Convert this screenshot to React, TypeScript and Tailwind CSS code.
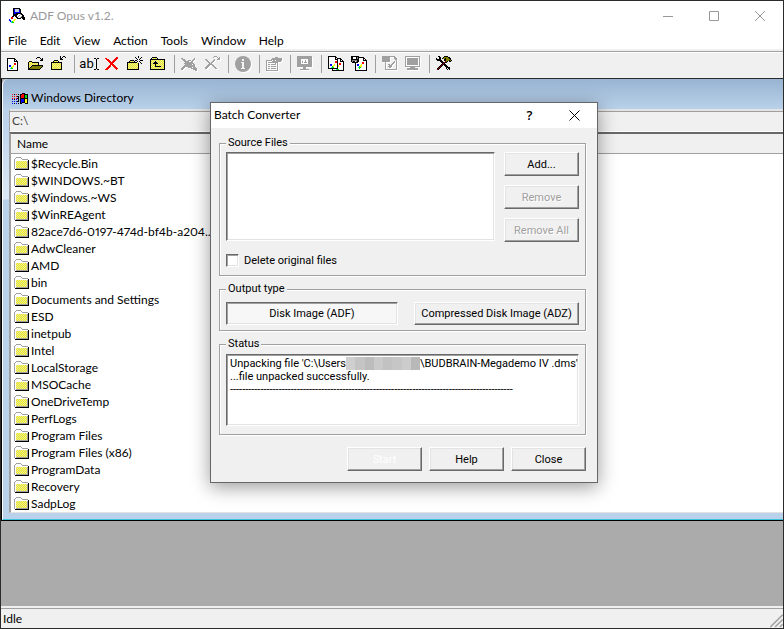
import { useState } from "react";
import type { ReactNode } from "react";

const COLORS: Record<string, string> = {
  k: "#000000",
  w: "#ffffff",
  y: "#ffff00",
  d: "#d8d8b8",
  o: "#808000",
  r: "#ff0000",
  b: "#0000ff",
  g: "#00e000",
  c: "#00e0e0",
  a: "#a0a0a0",
  s: "#808080",
  n: "#000080",
  m: "#800000",
  l: "#c8d0d8",
};

// one character per pixel, anything not in COLORS is transparent
function PixelIcon({ rows, className = "" }: { rows: string[]; className?: string }) {
  const w = Math.max(...rows.map((r) => r.length));
  return (
    <svg width={w} height={rows.length} viewBox={`0 0 ${w} ${rows.length}`} shapeRendering="crispEdges" className={`shrink-0 ${className}`} aria-hidden="true">
      {rows.map((row, y) =>
        row.split("").map((ch, x) =>
          COLORS[ch] ? <rect key={`${x}-${y}`} x={x} y={y} width="1" height="1" fill={COLORS[ch]} /> : null
        )
      )}
    </svg>
  );
}

const appIcon = [
  "....kkkkkkk.....",
  "....kbllllkk....",
  "....kbllllbk....",
  "....kbllllbk....",
  "....kbbbbbbk....",
  "....kbbkkkkkk...",
  "....kkkkkwwakk..",
  "....kkkkwwawwkk.",
  "...kk.kkwawwakk.",
  "..rr...kkwwakkkk",
  "..rr....kkkk.kkk",
  "b....yy.......kk",
  "bb..yy..........",
  ".bcgy...........",
  "..cgg...........",
  "................",
];

const windowsIcon = [
  "..........kkk...",
  "r.k.r.k.kkrrkkkk",
  "........krrrkggk",
  "r.r.rkk.krrrkggk",
  "......k.krrrkggk",
  "r.r.rkk.kkkkkkkk",
  "b.k.b.k.kbbbkyyk",
  "......k.kbbbkyyk",
  "b.b.bkk.kbbbkyyk",
  "........kbkkkyyk",
  "b.k.b.k.kk...kkk",
];

const folderIcon = [
  "..aaaaa.........",
  ".awwwwwa........",
  "awwwwwwwaaaaaa..",
  "awwwwwwwwwwwwwk.",
  "awdydydydydydak.",
  "awydydydydydyak.",
  "awdydydydydydak.",
  "awydydydydydyak.",
  "awdydydydydydak.",
  "awydydydydydyak.",
  "awdydydydydydak.",
  "awaaaaaaaaaaaak.",
  ".kkkkkkkkkkkkkk.",
];

const newIcon = [
  "................",
  "................",
  "...kkkkkkkk.....",
  "...kwwwwwwkk....",
  "...kwwwwwwkwk...",
  "...kwwwwwwkkkk..",
  "...kwwwwwwwwwk..",
  "...kwwwwwwrrwk..",
  "...kwwwwwwrrwk..",
  "...kwbbwwywwwk..",
  "...kwbbwyywwwk..",
  "...kwwwgywwwwk..",
  "...kwwcggwwwwk..",
  "...kwwwwwwwwwk..",
  "...kkkkkkkkkkk..",
  "................",
];

const openIcon = [
  "................",
  "..........kkk...",
  ".........k...k.k",
  "..............kk",
  ".............kkk",
  "..kkk...........",
  ".kydykkkkkkk....",
  ".kdydydydydk....",
  ".kydydydydyk....",
  ".kdydkkkkkkkkkkk",
  ".kydkooooooooook",
  ".kdkooooooooook.",
  ".kkooooooooook..",
  ".kkkkkkkkkkkk...",
  "................",
  "................",
];

const closeFolderIcon = [
  "..........k..kk.",
  "..........k.k..k",
  "..........kk....",
  "..........kkk...",
  "....kkkk........",
  "...kydydk.......",
  ".kkkkkkkkkkk....",
  ".kdydydydydk....",
  ".kydydydydyk....",
  ".kdydydydydk....",
  ".kydydydydyk....",
  ".kdydydydydk....",
  ".kydydydydyk....",
  ".kkkkkkkkkkk....",
  "................",
  "................",
];

const newFolderIcon = [
  "...........k....",
  "........k..k..k.",
  ".........k...k..",
  "..........k.k...",
  "...kkkk.kk...kkk",
  "..kydydk..k.k...",
  "kkkkkkkkkk...k..",
  "kdydydydydyk..k.",
  "kydydydydydk....",
  "kdydydydydyk....",
  "kydydydydydk....",
  "kdydydydydyk....",
  "kydydydydydk....",
  "kkkkkkkkkkkk....",
  "................",
  "................",
];

const upFolderIcon = [
  "................",
  "..kkkkk.........",
  ".kdydydk........",
  "kkkkkkkkkkkkkkk.",
  "kdydydydydydydk.",
  "kydydkdydydydyk.",
  "kdydkkkdydydydk.",
  "kydkkkkkdydydyk.",
  "kdydykydydydydk.",
  "kydydkdydydydyk.",
  "kdydykkkkkkdydk.",
  "kydydydydydydyk.",
  "kdydydydydydydk.",
  "kkkkkkkkkkkkkkk.",
  "................",
  "................",
];

const discardIcon = [
  "................",
  "................",
  "aa...........a..",
  ".aaa........aa..",
  "..aaa..aaa.aa...",
  "...aaaaa..aa....",
  "....aaaaaaaa....",
  "...aaaaaaaaaa...",
  "....aaaaaaa.aa..",
  "...aaaaaaaaaaa..",
  "..aaaaaaaaaaaa..",
  ".aaa...aaaa.aaa.",
  "aaa.......aaaaaa",
  "aa..........aaaa",
  "..............aa",
  "................",
];

const crossArrowIcon = [
  "..........aaa...",
  ".........a...a.a",
  "..............aa",
  ".aa.......a..aaa",
  "..aa.....aa.....",
  "...aa...aa......",
  "....aa.aa.......",
  ".....aaa........",
  "....aaaaa.......",
  "...aaa..aa......",
  "..aaa....aa.....",
  ".aaa......aa....",
  ".aa........aa...",
  "................",
  "................",
  "................",
];

const propertiesIcon = [
  "................",
  ".........aaa....",
  "......aaaaaaaaaa",
  ".....aaaaaaaaaaa",
  "aaaaaa.aa.aaaaaa",
  "a.....aaaaaaaaa.",
  "a.aaaaaaaaaa....",
  "a........a.a....",
  "a.aa.aaaaa.a....",
  "a..........a....",
  "a.aa.aaaaa.a....",
  "a..........a....",
  "a.aa.aaaaa.a....",
  "a..........a....",
  "aaaaaaaaaaaa....",
  "................",
];

const virtualIcon = [
  "aaaaaaaaaaaaaaa.",
  "aaaaaaaaaaaaaaa.",
  "aaaaaaaaaaaaaaa.",
  "aaaawwwwwwwaaaa.",
  "aaaawwwwawwaaaa.",
  "aaaawawwawwaaaa.",
  "aaaawawaaawaaaa.",
  "aaaawwwwwwwaaaa.",
  "aaaaaaaaaaaaaaa.",
  "aaaaaaaaaaaaaaa.",
  "aaaaaaaaaaaaaaa.",
  "......aaa.......",
  "......aaa.......",
  "...aaaaaaaaa....",
  "................",
  "................",
];

const convertIcon = [
  "kkkkkkkk........",
  "kwwwwwwkk.......",
  "kwwwwwwkwkkkk...",
  "kwwwwwwkkkwwkk..",
  "kwwwwwwwwkwwkwk.",
  "kwwwwwwrrkwwkkkk",
  "kwwwwwwrrkwwwwwk",
  "kwwwwwwwwkwrrwwk",
  "kwbbwwywwkwrrwwk",
  "kwbbwyywwkywwwwk",
  "kwwwgywwwkywwwwk",
  "kwwcggwwwkwwwwwk",
  "kkkkkkkkkkwwwwwk",
  "....kwwwcggwwwwk",
  "....kkkkkkkkkkkk",
  "................",
];

const saveDiskIcon = [
  "kkkkkkkk........",
  "kkwwwkskkkkkk...",
  "kkwwwkskwwwwkk..",
  "kkkkkkkkwwwwkwk.",
  "kssssskkwwwwkkkk",
  "kskkwskkwwwwwwwk",
  ".kkkkkkwwwwrrwwk",
  "....kwwwwwwrrwwk",
  "....kwbbwwywwwwk",
  "....kwbbwyywwwwk",
  "....kwwwgyywwwwk",
  "....kwwcggwwwwwk",
  "....kwwwgwwwwwwk",
  "....kwwwwwwwwwwk",
  "....kkkkkkkkkkkk",
  "................",
];

const checkDiskIcon = [
  "aaaaaaaaaaaaa...",
  "aaaaaaaa....aa..",
  "aaaaaaaa....aaa.",
  "aaaaaaaa.....aa.",
  "aaaaaaaa......a.",
  "aaaaaaaa....a.a.",
  "...a.......aa.a.",
  "...a......aa..a.",
  "...a..aa.aa...a.",
  "...a...aaa....a.",
  "...a..aaaa....a.",
  "...a...aa.....a.",
  "...a..........a.",
  "...aaaaaaaaaaaa.",
  "................",
  "................",
];

const monitorIcon = [
  "aaaaaaaaaaaaaaa.",
  "a.............a.",
  "a.aaaaaaaaaaa.a.",
  "a.aaaaaaaaaaa.a.",
  "a.aaaaaaaaaaa.a.",
  "a.aaaaaaaaaaa.a.",
  "a.aaaaaaaaaaa.a.",
  "a.aaaaaaaaaaa.a.",
  "a.aaaaaaaaaaa.a.",
  "a.............a.",
  "aaaaaaaaaaaaaaa.",
  ".....aaaaa......",
  "..aaaaaaaaaaa...",
  "..aaaaaaaaaaa...",
  "................",
  "................",
];

const toolsIcon = [
  "..kk....kkkk....",
  "...kk..kooookk..",
  "k..kk.kookoookk.",
  "kkkkk...kkooook.",
  ".kkkkk..kkoookok",
  "....kkk..mok.kk.",
  ".....kkkmkk.....",
  "......kmk.......",
  ".....kmkkk......",
  "....kmk.kkk.....",
  "...kmk...kkk....",
  "..kmk.....kkkk..",
  ".kmk......k.kk..",
  ".mk........k.k..",
  "................",
  "................",
];

const ibeamIcon = [
  "kk.kk",
  "..k..",
  "..k..",
  "..k..",
  "..k..",
  "..k..",
  "..k..",
  "..k..",
  "..k..",
  "..k..",
  "..k..",
  "kk.kk",
];

function Tool({ label, disabled = false, children }: { label: string; disabled?: boolean; children: ReactNode }) {
  return (
    <button
      aria-label={label}
      disabled={disabled}
      className={`flex h-[22px] w-[23px] items-center justify-center pr-px ${disabled ? "drop-shadow-[1px_1px_0_#ffffff]" : ""}`}
    >
      {children}
    </button>
  );
}

function Separator() {
  return (
    <div className="flex h-[18px] w-2 justify-center">
      <div className="w-px bg-[#a0a0a0]" />
    </div>
  );
}

function Toolbar() {
  return (
    <div className="flex h-[26px] items-center border-t border-white bg-[#f0f0f0] pb-[3px]">
      <Tool label="New"><PixelIcon rows={newIcon} /></Tool>
      <Tool label="Open"><PixelIcon rows={openIcon} /></Tool>
      <Tool label="Close image"><PixelIcon rows={closeFolderIcon} /></Tool>
      <Separator />
      <Tool label="Rename">
        <span className="text-[13px] leading-4 font-[Roboto,sans-serif]">ab</span>
        <PixelIcon rows={ibeamIcon} />
      </Tool>
      <Tool label="Delete">
        <svg width="14" height="14" viewBox="0 0 14 14" stroke="#ff0000" strokeWidth="2" shapeRendering="crispEdges">
          <path d="M0.5 1 L12.5 12.5 M12.5 0.5 L1 13" fill="none" />
        </svg>
      </Tool>
      <Tool label="New folder"><PixelIcon rows={newFolderIcon} /></Tool>
      <Tool label="Up one level"><PixelIcon rows={upFolderIcon} /></Tool>
      <Separator />
      <Tool label="Discard" disabled><PixelIcon rows={discardIcon} /></Tool>
      <Tool label="Undelete" disabled><PixelIcon rows={crossArrowIcon} /></Tool>
      <Separator />
      <Tool label="Information" disabled>
        <svg width="16" height="16" viewBox="0 0 16 16">
          <circle cx="8" cy="8" r="8" fill="#a0a0a0" />
          <path d="M7 3h2v2H7z M6 6h3v6h1v1H6v-1h1V7H6z" fill="#f4f4f4" />
        </svg>
      </Tool>
      <Separator />
      <Tool label="Properties" disabled><PixelIcon rows={propertiesIcon} /></Tool>
      <Separator />
      <Tool label="Disk contents" disabled><PixelIcon rows={virtualIcon} /></Tool>
      <Separator />
      <Tool label="Batch convert"><PixelIcon rows={convertIcon} /></Tool>
      <Tool label="Disk to image"><PixelIcon rows={saveDiskIcon} /></Tool>
      <Separator />
      <Tool label="Check disk" disabled><PixelIcon rows={checkDiskIcon} /></Tool>
      <Tool label="Run emulator" disabled><PixelIcon rows={monitorIcon} /></Tool>
      <Separator />
      <Tool label="Options"><PixelIcon rows={toolsIcon} /></Tool>
    </div>
  );
}

const menus = ["File", "Edit", "View", "Action", "Tools", "Window", "Help"];

const folders = [
  "$Recycle.Bin",
  "$WINDOWS.~BT",
  "$Windows.~WS",
  "$WinREAgent",
  "82ace7d6-0197-474d-bf4b-a204...",
  "AdwCleaner",
  "AMD",
  "bin",
  "Documents and Settings",
  "ESD",
  "inetpub",
  "Intel",
  "LocalStorage",
  "MSOCache",
  "OneDriveTemp",
  "PerfLogs",
  "Program Files",
  "Program Files (x86)",
  "ProgramData",
  "Recovery",
  "SadpLog",
];

function TitleBar() {
  return (
    <header className="flex h-[30px] items-center pl-2">
      <PixelIcon rows={appIcon} />
      <h1 className="flex-1 pl-[5px] text-[#999999]">ADF Opus v1.2.</h1>
      <div className="flex h-full text-[#999999]">
        <button aria-label="Minimize" className="flex w-[46px] items-center justify-center">
          <svg width="10" height="10" stroke="currentColor"><path d="M0 5.5h10" /></svg>
        </button>
        <button aria-label="Maximize" className="flex w-[46px] items-center justify-center">
          <svg width="10" height="10" stroke="currentColor" fill="none"><path d="M.5 .5h9v9h-9z" /></svg>
        </button>
        <button aria-label="Close" className="flex w-[46px] items-center justify-center">
          <svg width="10" height="10" stroke="currentColor"><path d="M0 0l10 10M10 0L0 10" /></svg>
        </button>
      </div>
    </header>
  );
}

function DirectoryWindow() {
  return (
    <section className="border-b border-l border-black">
      <div className="flex flex-col rounded-tl-md border-b border-l border-b-[#3cc4dc] border-l-white bg-[#b9d1ea] bg-[linear-gradient(#98b4d2,#b9d1ea_30px,#dce8f5_120px,#b9d1ea_121px)] pb-[6px] pl-[6px]">
        <div className="flex h-[30px] items-center pt-2 pl-[3px]">
          <PixelIcon rows={windowsIcon} />
          <h2 className="pl-[3px]">Windows Directory</h2>
        </div>
        <div className="border-t-2 border-b border-l border-t-[#e3e3e3] border-b-white border-l-[#a0a0a0]">
          <div className="h-[20px] border-t border-[#a0a0a0] bg-[#f0f0f0] pl-[2px] leading-[18px] text-[#444444]">C:\</div>
        </div>
        <div className="border-t-2 border-b border-l-2 border-t-[#696969] border-b-[#e3e3e3] border-l-[#a0a0a0] bg-white">
          <table className="w-full table-fixed border-collapse">
            <thead>
              <tr className="h-[19px] border-b border-[#a0a0a0] bg-[#f0f0f0]">
                <th className="w-[199px] border-r border-[#a0a0a0] p-0 pt-px pl-[6px] text-left leading-[17px] font-normal">Name</th>
                <th className="p-0" />
              </tr>
            </thead>
            <tbody>
              <tr className="h-[2px]"><td /></tr>
              {folders.map((name) => (
                <tr key={name}>
                  <td className="p-0 pl-[3px]">
                    <div className="flex h-[17px] items-center whitespace-nowrap proportional-nums">
                      <PixelIcon rows={folderIcon} />
                      <span className="pl-px">{name}</span>
                    </div>
                  </td>
                  <td />
                </tr>
              ))}
            </tbody>
          </table>
        </div>
      </div>
    </section>
  );
}

function DialogButton({ className = "", children, disabled, onClick }: { className?: string; children: ReactNode; disabled?: boolean; onClick?: () => void }) {
  return (
    <button
      disabled={disabled}
      onClick={onClick}
      className={`h-6 border border-t-white border-r-[#696969] border-b-[#696969] border-l-white bg-[#f0f0f0] shadow-[inset_-1px_-1px_#a0a0a0,inset_1px_1px_#e3e3e3] ${className}`}
    >
      {children}
    </button>
  );
}

function Group({ title, className = "", children }: { title: string; className?: string; children: ReactNode }) {
  return (
    <fieldset className={`border border-[#a0a0a0] px-[6px] shadow-[1px_1px_#ffffff,inset_1px_1px_#ffffff] ${className}`}>
      <legend className="bg-[#f0f0f0] px-[2px] leading-3">{title}</legend>
      {children}
    </fieldset>
  );
}

// blurred-out user name inside the log line
const mosaic = ["bg-[#cfcfcf]", "bg-[#c4c4c4]", "bg-[#bcbcbc]", "bg-[#cacaca]", "bg-[#c2c2c2]", "bg-[#c6c6c6]", "bg-[#cccccc]", "bg-[#b8b8b8]"];

function BatchDialog() {
  const [deleteOriginals, setDeleteOriginals] = useState(false);
  const [format, setFormat] = useState("adf");
  const [open, setOpen] = useState(true);

  if (!open) return null;

  const raised = "border-t-white border-r-[#696969] border-b-[#696969] border-l-white bg-[#f0f0f0] shadow-[inset_-1px_-1px_#a0a0a0,inset_1px_1px_#e3e3e3]";
  const pressed = "border-t-[#696969] border-r-white border-b-white border-l-[#696969] bg-[#f7f7f7] shadow-[inset_1px_1px_#a0a0a0,inset_-1px_-1px_#e3e3e3]";

  return (
    <div
      role="dialog"
      aria-label="Batch Converter"
      className="absolute top-[101px] left-[209px] w-[388px] border border-[#666666] bg-[#f0f0f0] text-[11px] leading-[13px] font-[Roboto,Arial,sans-serif] shadow-[0_4px_18px_rgba(0,0,0,0.4)]"
    >
      <div className="flex h-[25px] items-center bg-white pb-px pl-[3px]">
        <h2 className="flex-1 text-xs font-[Lato,sans-serif]">Batch Converter</h2>
        <button aria-label="Help" className="w-[45px] text-[13px] font-semibold font-['Open_Sans',sans-serif]">?</button>
        <button aria-label="Close dialog" onClick={() => setOpen(false)} className="flex w-[45px] justify-center">
          <svg width="11" height="11" stroke="#000000"><path d="M.5 .5l10 10M10.5 .5l-10 10" /></svg>
        </button>
      </div>

      <div className="pt-[9px] pr-[11px] pb-[11px] pl-2">
        <Group title="Source Files" className="pb-2">
          <div className="flex gap-[9px] pt-[3px]">
            <div role="listbox" aria-label="Source Files" className="h-[89px] flex-1 border border-t-[#696969] border-r-white border-b-white border-l-[#696969] bg-white shadow-[inset_1px_1px_#a0a0a0,inset_-1px_-1px_#e3e3e3]" />
            <div className="flex w-[75px] flex-col gap-[9px]">
              <DialogButton>Add...</DialogButton>
              <DialogButton disabled className="text-[#a0a0a0] text-shadow-[1px_1px_#ffffff]">Remove</DialogButton>
              <DialogButton disabled className="text-[#a0a0a0] text-shadow-[1px_1px_#ffffff]">Remove All</DialogButton>
            </div>
          </div>
          <label className="mt-3 flex items-center gap-[5px]">
            <input
              type="checkbox"
              checked={deleteOriginals}
              onChange={(e) => setDeleteOriginals(e.target.checked)}
              className="size-[13px] appearance-none border border-t-[#696969] border-r-white border-b-white border-l-[#696969] bg-white shadow-[inset_1px_1px_#a0a0a0,inset_-1px_-1px_#e3e3e3] checked:bg-[#696969]"
            />
            Delete original files
          </label>
        </Group>

        <Group title="Output type" className="mt-[7px] pb-[5px]">
          <div className="flex gap-4 pt-[7px]">
            <button
              aria-pressed={format === "adf"}
              onClick={() => setFormat("adf")}
              className={`h-[23px] flex-1 border ${format === "adf" ? pressed : raised}`}
            >
              Disk Image (ADF)
            </button>
            <button
              aria-pressed={format === "adz"}
              onClick={() => setFormat("adz")}
              className={`h-[23px] w-[165px] border whitespace-nowrap ${format === "adz" ? pressed : raised}`}
            >
              Compressed Disk Image (ADZ)
            </button>
          </div>
        </Group>

        <Group title="Status" className="mt-[7px] pb-2">
          <div className="mt-1 h-[72px] overflow-hidden border border-t-[#696969] border-r-white border-b-white border-l-[#696969] bg-white pt-[2px] pl-[3px] whitespace-nowrap shadow-[inset_1px_1px_#a0a0a0,inset_-1px_-1px_#e3e3e3]">
            <div className="flex">
              <span>Unpacking file 'C:\Users</span>
              <span className="flex w-[74px]">
                {mosaic.map((shade, i) => (
                  <span key={i} className={`h-[13px] flex-1 ${shade}`} />
                ))}
              </span>
              <span>\BUDBRAIN-Megademo IV .dms'</span>
            </div>
            <p>...file unpacked successfully.</p>
            <p>{"-".repeat(93)}</p>
          </div>
        </Group>

        <div className="mt-3 flex justify-end gap-[7px]">
          <DialogButton disabled className="w-[75px] text-white">Start</DialogButton>
          <DialogButton className="w-[75px]">Help</DialogButton>
          <DialogButton className="w-[75px]" onClick={() => setOpen(false)}>Close</DialogButton>
        </div>
      </div>
    </div>
  );
}

export default function App() {
  return (
    <div className="relative flex min-h-screen flex-col overflow-hidden border border-[#2b2b2b] bg-white text-xs leading-4 text-black font-[Lato,sans-serif]">
      <TitleBar />
      <nav className="flex h-[18px] items-end">
        {menus.map((item) => (
          <button key={item} className="pr-[6px] pl-[7px]">{item}</button>
        ))}
      </nav>
      <div className="h-[3px] border-b border-[#a0a0a0] bg-[#f0f0f0]" />
      <Toolbar />
      <main className="flex-1 border-t border-[#2b2b2b] bg-[#ababab]">
        <DirectoryWindow />
      </main>
      <footer className="flex h-[22px] justify-between border-t-2 border-[#f0f0f0] bg-[#f0f0f0]">
        <div className="flex-1 border-t border-[#a0a0a0] pl-[2px] leading-[19px]">Idle</div>
        <svg width="13" height="20" viewBox="0 0 13 20" className="border-t border-[#a0a0a0]" stroke="#a0a0a0" strokeWidth="1.5">
          <path d="M0 19L13 6M5 19L13 11M10 19L13 16" />
        </svg>
      </footer>

      <BatchDialog />
    </div>
  );
}
